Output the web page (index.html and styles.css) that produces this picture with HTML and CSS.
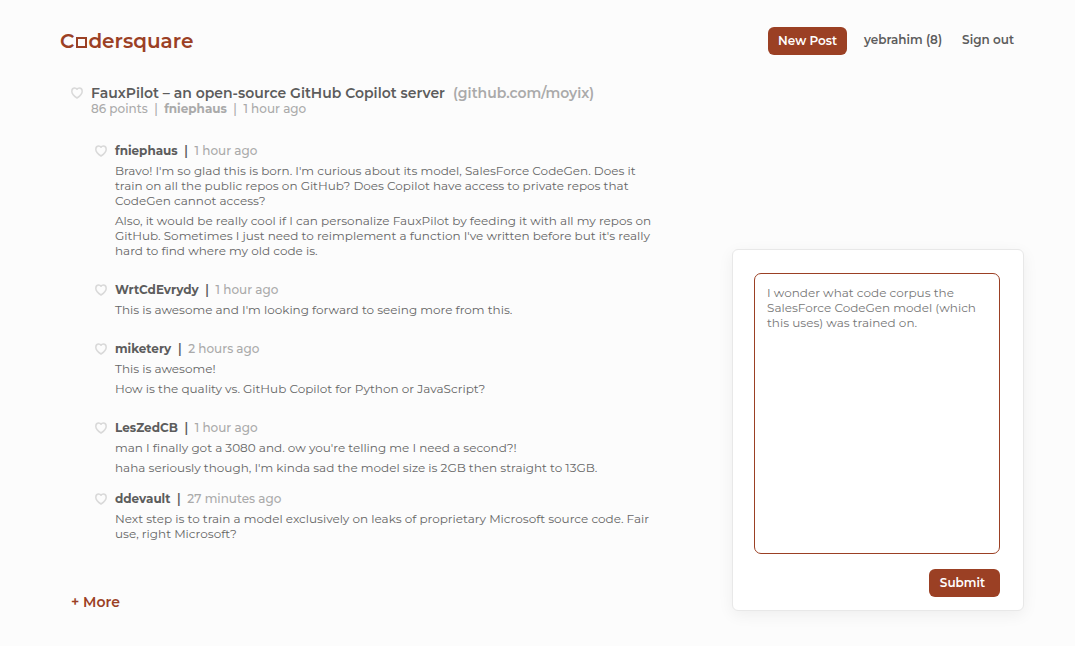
FILE: index.html
```html
<!DOCTYPE html>
<html lang="en">
<head>
<meta charset="utf-8">
<meta name="viewport" content="width=device-width, initial-scale=1">
<title>Codersquare</title>
<link rel="stylesheet" href="styles.css">
</head>
<body>
<svg class="sprite" aria-hidden="true">
  <symbol id="heart" viewBox="0 0 12 12">
    <path d="M6 11C4 9.800 .8 7.500 .8 4.300C.8 2.300 2.200 1 3.700 1C4.800 1 5.600 1.600 6 2.300C6.400 1.600 7.200 1 8.300 1C9.800 1 11.200 2.300 11.200 4.300C11.200 7.500 8 9.800 6 11Z" fill="none" stroke="currentColor" stroke-width="1.500" stroke-linejoin="round"/>
  </symbol>
</svg>
<header class="topbar">
  <a class="logo" href="#">C<span class="logo-square"></span>dersquare</a>
  <nav class="nav">
    <button class="button new-post" type="button">New Post</button>
    <div class="nav-links">
      <a class="nav-link" href="#">yebrahim (8)</a>
      <a class="nav-link" href="#">Sign out</a>
    </div>
  </nav>
</header>
<main class="layout">
  <section class="thread">
    <article class="post">
      <button class="like" type="button" aria-label="Like post"><svg class="heart"><use href="#heart"/></svg></button>
      <div>
        <h1 class="post-title"><a href="#">FauxPilot – an open-source GitHub Copilot server</a><a class="post-source" href="#">(github.com/moyix)</a></h1>
        <p class="post-meta"><span>86 points</span><span>  |  </span><a class="author" href="#">fniephaus</a><span>  |  </span><span>1 hour ago</span></p>
      </div>
    </article>
    <div class="comments">
      <article class="comment">
        <button class="like" type="button" aria-label="Like comment"><svg class="heart"><use href="#heart"/></svg></button>
        <div class="comment-body">
          <p class="comment-meta"><a class="author" href="#">fniephaus</a><span>  |  </span><span class="time">1 hour ago</span></p>
          <p>Bravo! I'm so glad this is born. I'm curious about its model, SalesForce CodeGen. Does it train on all the public repos on GitHub? Does Copilot have access to private repos that CodeGen cannot access?</p>
          <p>Also, it would be really cool if I can personalize FauxPilot by feeding it with all my repos on GitHub. Sometimes I just need to reimplement a function I've written before but it's really hard to find where my old code is.</p>
        </div>
      </article>
      <article class="comment">
        <button class="like" type="button" aria-label="Like comment"><svg class="heart"><use href="#heart"/></svg></button>
        <div class="comment-body">
          <p class="comment-meta"><a class="author" href="#">WrtCdEvrydy</a><span>  |  </span><span class="time">1 hour ago</span></p>
          <p>This is awesome and I'm looking forward to seeing more from this.</p>
        </div>
      </article>
      <article class="comment">
        <button class="like" type="button" aria-label="Like comment"><svg class="heart"><use href="#heart"/></svg></button>
        <div class="comment-body">
          <p class="comment-meta"><a class="author" href="#">miketery</a><span>  |  </span><span class="time">2 hours ago</span></p>
          <p>This is awesome!</p>
          <p>How is the quality vs. GitHub Copilot for Python or JavaScript?</p>
        </div>
      </article>
      <article class="comment">
        <button class="like" type="button" aria-label="Like comment"><svg class="heart"><use href="#heart"/></svg></button>
        <div class="comment-body">
          <p class="comment-meta"><a class="author" href="#">LesZedCB</a><span>  |  </span><span class="time">1 hour ago</span></p>
          <p>man I finally got a 3080 and. ow you're telling me I need a second?!</p>
          <p>haha seriously though, I'm kinda sad the model size is 2GB then straight to 13GB.</p>
        </div>
      </article>
      <article class="comment">
        <button class="like" type="button" aria-label="Like comment"><svg class="heart"><use href="#heart"/></svg></button>
        <div class="comment-body">
          <p class="comment-meta"><a class="author" href="#">ddevault</a><span>  |  </span><span class="time">27 minutes ago</span></p>
          <p>Next step is to train a model exclusively on leaks of proprietary Microsoft source code. Fair use, right Microsoft?</p>
        </div>
      </article>
    </div>
    <a class="more" href="#">+ More</a>
  </section>
  <form class="reply">
    <textarea class="reply-text" aria-label="Your comment">I wonder what code corpus the SalesForce CodeGen model (which this uses) was trained on.</textarea>
    <button class="button submit" type="button">Submit</button>
  </form>
</main>
</body>
</html>
```
FILE: styles.css
```css
* {
  box-sizing: border-box;
}

body {
  margin: 0;
  padding: 27px 51px 35px 60px;
  background: #fcfcfc;
  color: #666;
  font-family: Montserrat, Inter, "Open Sans", sans-serif;
  font-size: 12px;
  line-height: 15px;
}

a {
  color: inherit;
  text-decoration: none;
}

p,
h1 {
  margin: 0;
}

button,
textarea {
  font: inherit;
}

.sprite {
  display: none;
}

.topbar {
  display: flex;
  align-items: center;
  justify-content: space-between;
}

.logo {
  color: #9b4024;
  font-size: 20px;
  font-weight: 600;
  line-height: 28px;
}

.logo-square {
  display: inline-block;
  width: 11px;
  height: 11px;
  margin: 0 1px 0 2px;
  border: 2px solid #9b4024;
}

.nav {
  display: flex;
  align-items: center;
  gap: 17px;
  padding-right: 10px;
}

.nav-links {
  display: flex;
  gap: 20px;
}

.nav-link {
  color: #5c5c5c;
  font-weight: 600;
  line-height: 26px;
  padding-bottom: 2px;
}

.button {
  height: 28px;
  padding: 0 10px 1px;
  border: 0;
  border-radius: 6px;
  background: #9b4024;
  color: #fff;
  font-weight: 600;
  cursor: pointer;
}

.layout {
  display: grid;
  grid-template-columns: minmax(0, 1fr) 292px;
  column-gap: 80px;
  align-items: end;
  padding-top: 30px;
}

.thread {
  padding-left: 11px;
}

.post,
.comment {
  display: flex;
  align-items: flex-start;
  gap: 8px;
}

.like {
  display: flex;
  flex: none;
  padding: 2px 0;
  border: 0;
  background: none;
  color: #d9d9d9;
  cursor: pointer;
}

.heart {
  width: 12px;
  height: 12px;
}

.post-title {
  display: flex;
  gap: 8px;
  color: #5c5c5c;
  font-size: 14px;
  font-weight: 600;
  line-height: 16px;
}

.post-source,
.post-meta,
.time {
  color: #aaa;
}

.post-meta,
.comment-meta {
  font-weight: 500;
  white-space: pre-wrap;
}

.author {
  font-weight: 700;
}

.comment-meta {
  color: #5c5c5c;
  font-weight: 600;
}

.comment-meta .time {
  color: #aaa;
  font-weight: 500;
}

.comments {
  display: flex;
  flex-direction: column;
  gap: 24px;
  padding: 27px 0 0 24px;
}

.comment:last-child {
  margin-top: -8px;
}

.comment-body {
  display: flex;
  flex-direction: column;
  gap: 5px;
  max-width: 540px;
}

.more {
  display: block;
  padding: 53px 0 1px;
  color: #9b4024;
  font-size: 14px;
  font-weight: 600;
  line-height: 16px;
}

.reply {
  display: flex;
  flex-direction: column;
  align-items: flex-end;
  gap: 15px;
  padding: 23px 23px 13px 21px;
  border: 1px solid #e8e8e8;
  border-radius: 6px;
  background: #fff;
  box-shadow: 0 4px 16px rgba(0, 0, 0, 0.06);
}

.reply-text {
  display: block;
  width: 100%;
  height: 281px;
  padding: 11px 12px;
  border: 1px solid #9b4024;
  border-radius: 7px;
  outline: 0;
  background: #fff;
  color: #777;
  resize: none;
}

.submit {
  padding: 0 15px 1px 11px;
}
```
